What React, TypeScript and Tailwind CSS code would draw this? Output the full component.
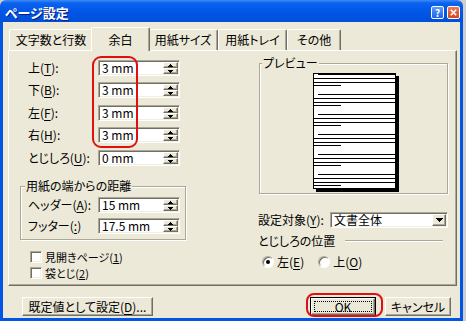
import React from 'react';

const sunken =
  'border border-t-[#ACA899] border-l-[#ACA899] border-b-white border-r-white shadow-[inset_1px_1px_0_#716F64,inset_-1px_-1px_0_#F1EFE2]';
const raised =
  'border border-t-white border-l-white border-b-[#716F64] border-r-[#716F64] shadow-[inset_-1px_-1px_0_#ACA899]';

const Arrow: React.FC<{ up?: boolean }> = ({ up }) => (
  <svg width="5" height="3" viewBox="0 0 5 3" shapeRendering="crispEdges">
    {up ? (
      <path d="M2 0h1v1h1v1h1v1H0V2h1V1h1z" fill="#000" />
    ) : (
      <path d="M0 0h5v1H4v1H3v1H2V2H1V1H0z" fill="#000" />
    )}
  </svg>
);

const Spin: React.FC<{ value: string }> = ({ value }) => (
  <div className={`flex w-[82px] h-[16px] bg-white ${sunken}`}>
    <div className="flex-1 pl-[3px] text-[12px] leading-[14px]">{value}</div>
    <div className="flex flex-col w-[16px] py-[1px] pr-[1px]">
      <div className={`flex-1 flex items-center justify-center bg-[#ECE9D8] ${raised}`}>
        <Arrow up />
      </div>
      <div className={`flex-1 flex items-center justify-center bg-[#ECE9D8] ${raised}`}>
        <Arrow />
      </div>
    </div>
  </div>
);

const Key: React.FC<{ k: string }> = ({ k }) => <span className="underline underline-offset-[2px]">{k}</span>;

const Check: React.FC = () => (
  <div className={`w-[12px] h-[12px] bg-white ${sunken}`}></div>
);

const Radio: React.FC<{ on?: boolean }> = ({ on }) => (
  <div className="w-[12px] h-[12px] rounded-full bg-white border border-t-[#ACA899] border-l-[#ACA899] border-b-white border-r-white shadow-[inset_1px_1px_0_#716F64] flex items-center justify-center">
    {on && <div className="w-[4px] h-[4px] rounded-full bg-black"></div>}
  </div>
);

const PagePreview: React.FC = () => {
  const blocks = [0, 20, 40, 60, 80, 100];
  return (
    <svg width="86" height="119" viewBox="0 0 86 119" shapeRendering="crispEdges">
      <rect x="3" y="3" width="83" height="116" fill="#000" />
      <rect x="0.5" y="0.5" width="82" height="115" fill="#fff" stroke="#000" />
      {blocks.map((b) => (
        <g key={b} fill="#000">
          <rect x="5" y={b + 1} width="78" height="1" />
          <rect x="0" y={b + 5} width="83" height="1" />
          <rect x="0" y={b + 9} width="83" height="1" />
          <rect x="0" y={b + 12} width="28" height="1" />
        </g>
      ))}
    </svg>
  );
};

const App: React.FC = () => {
  const margins = [
    { label: '上', key: 'T', value: '3 mm', mt: 'mt-0' },
    { label: '下', key: 'B', value: '3 mm', mt: 'mt-[6px]' },
    { label: '左', key: 'F', value: '3 mm', mt: 'mt-[7px]' },
    { label: '右', key: 'H', value: '3 mm', mt: 'mt-[6px]' },
    { label: 'とじしろ', key: 'U', value: '0 mm', mt: 'mt-[7px]' },
  ];

  return (
    <div className="relative w-[466px] h-[321px] bg-[#cfcfcf] overflow-hidden [font-family:'Noto_Sans_CJK_JP','Noto_Sans',sans-serif] [font-feature-settings:'palt'] text-black">
      <div className="w-[463px] h-[321px] flex flex-col">
        {/* title bar */}
        <div className="h-[22px] rounded-t-[6px] bg-[linear-gradient(to_bottom,#3D8CF5_0%,#0A62EE_14%,#0056E6_55%,#0050D8_100%)] flex items-center justify-between pt-[3px] pl-[5px] pr-[3px]">
          <span className="text-white font-bold text-[13px] leading-[16px] [text-shadow:1px_1px_#0A1883]">ページ設定</span>
          <div className="flex gap-[3px]">
            <div className="w-[13px] h-[13px] rounded-[2px] border border-white bg-[linear-gradient(to_bottom,#5C9BFF,#1E62E8)] flex items-center justify-center text-white text-[10px] font-bold leading-none">?</div>
            <div className="w-[13px] h-[13px] rounded-[2px] border border-white bg-[linear-gradient(to_bottom,#EC7A58,#D4461E)] flex items-center justify-center">
              <svg width="7" height="7" viewBox="0 0 7 7">
                <path d="M0.8 0.8L6.2 6.2M6.2 0.8L0.8 6.2" stroke="#fff" strokeWidth="1.6" />
              </svg>
            </div>
          </div>
        </div>

        {/* frame */}
        <div className="flex-1 bg-[#0055E5] px-[3px] pb-[3px] flex">
          <div className="flex-1 bg-[#ECE9D8] flex flex-col pt-[5px] pl-[5px] pr-[3px]">
            {/* tabs */}
            <div className="h-[23px] flex items-end pl-[1px] text-[12px]">
              <div className="w-[84px] h-[21px] flex items-center justify-center border-t border-l border-white border-r border-r-[#716F64] rounded-t-[2px] shadow-[inset_-1px_0_0_#ACA899]">文字数と行数</div>
              <div className="relative z-10 -ml-[2px] -mr-[2px] -mb-[1px] w-[59px] h-[24px] bg-[#ECE9D8] flex items-start pt-[3px] justify-center border-t border-l border-white border-r border-r-[#716F64] rounded-t-[2px] shadow-[inset_-1px_0_0_#ACA899]">余白</div>
              <div className="w-[70px] h-[21px] flex items-center justify-center border-t border-l border-white border-r border-r-[#716F64] rounded-t-[2px] shadow-[inset_-1px_0_0_#ACA899]">用紙サイズ</div>
              <div className="w-[69px] h-[21px] flex items-center justify-center border-t border-l border-white border-r border-r-[#716F64] rounded-t-[2px] shadow-[inset_-1px_0_0_#ACA899]">用紙トレイ</div>
              <div className="w-[54px] h-[21px] flex items-center justify-center border-t border-l border-white border-r border-r-[#716F64] rounded-t-[2px] shadow-[inset_-1px_0_0_#ACA899]">その他</div>
            </div>

            {/* tab page */}
            <div className="h-[236px] flex border border-t-white border-l-white border-b-[#716F64] border-r-[#716F64] shadow-[inset_-1px_-1px_0_#ACA899] text-[12px] leading-[14px]">
              {/* left column */}
              <div className="w-[242px] pl-[11px] pt-[9px] flex flex-col">
                {margins.map((m) => (
                  <div key={m.key} className={`flex items-center h-[16px] pl-[8px] ${m.mt}`}>
                    <span className="w-[70px]">
                      {m.label}(<Key k={m.key} />):
                    </span>
                    <Spin value={m.value} />
                  </div>
                ))}

                <div className="relative mt-[20px] w-[166px] h-[54px] border border-[#ACA899] shadow-[inset_1px_1px_0_#fff,1px_1px_0_#fff] pt-[10px] pl-[7px]">
                  <span className="absolute -top-[8px] left-[4px] px-[1px] bg-[#ECE9D8]">用紙の端からの距離</span>
                  <div className="flex items-center h-[16px]">
                    <span className="w-[70px]">
                      ヘッダー(<Key k="A" />):
                    </span>
                    <Spin value="15 mm" />
                  </div>
                  <div className="flex items-center h-[16px] mt-[5px]">
                    <span className="w-[70px]">
                      フッター(<Key k=":" />)
                    </span>
                    <Spin value="17.5 mm" />
                  </div>
                </div>

                <div className="mt-[9px] pl-[10px] flex flex-col text-[11px]">
                  <div className="flex items-center h-[16px] gap-[3px]">
                    <Check />
                    <span className="leading-[12px]">
                      見開きページ(<span className="underline underline-offset-[1px]">1</span>)
                    </span>
                  </div>
                  <div className="flex items-center h-[16px] gap-[3px]">
                    <Check />
                    <span className="leading-[12px]">
                      袋とじ(<span className="underline underline-offset-[1px]">2</span>)
                    </span>
                  </div>
                </div>
              </div>

              {/* right column */}
              <div className="flex-1 pl-[8px] pt-[12px] flex flex-col">
                <div className="relative w-[189px] h-[131px] border border-[#ACA899] shadow-[inset_1px_1px_0_#fff,1px_1px_0_#fff] pt-[9px] pl-[53px]">
                  <span className="absolute -top-[8px] left-[2px] px-[1px] bg-[#ECE9D8]">プレビュー</span>
                  <PagePreview />
                </div>

                <div className="mt-[18px] flex items-center h-[16px] -ml-[1px]">
                  <span className="w-[72px]">
                    設定対象(<Key k="Y" />):
                  </span>
                  <div className={`flex w-[118px] h-[16px] bg-white ${sunken}`}>
                    <div className="flex-1 pl-[3px] leading-[14px]">文書全体</div>
                    <div className={`w-[14px] my-[1px] mr-[1px] flex items-center justify-center bg-[#ECE9D8] ${raised}`}>
                      <svg width="7" height="4" viewBox="0 0 7 4" shapeRendering="crispEdges">
                        <path d="M0 0h7v1H6v1H5v1H4v1H3V3H2V2H1V1H0z" fill="#000" />
                      </svg>
                    </div>
                  </div>
                </div>

                <div className="mt-[6px] flex items-center h-[14px] -ml-[1px]">
                  <span>とじしろの位置</span>
                  <div className="ml-[10px] w-[98px] h-[2px] border-t border-t-[#ACA899] border-b border-b-white"></div>
                </div>

                <div className="mt-[7px] flex items-center h-[14px] pl-[3px]">
                  <Radio on />
                  <span className="ml-[3px]">
                    左(<Key k="E" />)
                  </span>
                  <div className="ml-[14px]">
                    <Radio />
                  </div>
                  <span className="ml-[3px]">
                    上(<Key k="O" />)
                  </span>
                </div>
              </div>
            </div>

            {/* buttons */}
            <div className="mt-[11px] flex items-center text-[12px] pl-[14px] pr-[6px]">
              <div className={`w-[131px] h-[19px] flex items-center justify-center bg-[#ECE9D8] ${raised}`}>
                既定値として設定(<Key k="D" />)...
              </div>
              <div className="ml-auto w-[66px] h-[19px] border border-black">
                <div className={`w-full h-full flex p-[2px] bg-[#ECE9D8] ${raised}`}>
                  <div className="flex-1 flex items-center justify-center border border-dotted border-black leading-none">OK</div>
                </div>
              </div>
              <div className={`ml-[9px] w-[66px] h-[19px] flex items-center justify-center bg-[#ECE9D8] ${raised}`}>
                キャンセル
              </div>
            </div>
          </div>
        </div>
      </div>

      {/* red annotations */}
      <div className="absolute left-[92px] top-[56px] w-[46px] h-[92px] border-2 border-[#E01010] rounded-[9px] pointer-events-none"></div>
      <div className="absolute left-[306px] top-[293px] w-[77px] h-[24px] border-2 border-[#E01010] rounded-[8px] pointer-events-none"></div>
    </div>
  );
};

export default App;
